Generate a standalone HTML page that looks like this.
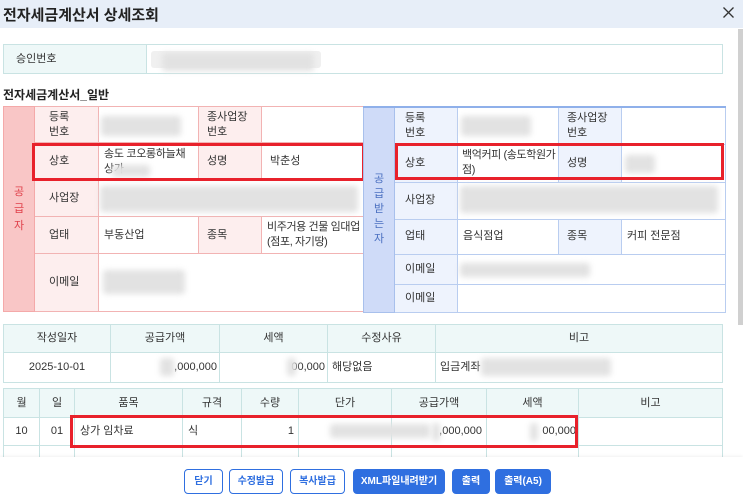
<!DOCTYPE html>
<html><head><meta charset="utf-8"><style>
*{margin:0;padding:0;box-sizing:border-box}
body{width:743px;height:495px;overflow:hidden;background:#fff;font-family:"Liberation Sans","Noto Sans CJK KR",sans-serif;color:#333;font-size:11px;position:relative}
.a{position:absolute}
table{border-collapse:collapse;table-layout:fixed;position:absolute}
td{font-size:11px;line-height:15px;padding:0 8px;vertical-align:middle;overflow:hidden;word-break:break-all}
.s td{border:1px solid #f2b3b3}
.s td.l{background:#fdeeee}
.r td{border:1px solid #b9cdf0}
.r td.l{background:#eef3fd}
.g td{border:1px solid #c9e3e3}
.g td.h{background:#eef8f8;text-align:center}
.blur{position:absolute;background:#e2e2e2;filter:blur(3px);border-radius:3px}
.red{position:absolute;border:3px solid #e8212b}
.btn{position:absolute;top:469px;height:25px;border:1px solid #2f6fe0;border-radius:4px;color:#2f6fe0;font-size:10px;font-weight:bold;text-align:center;line-height:23px;background:#fff}
.btn.f{background:#2f6fe0;color:#fff}
</style></head><body>
<div class="a" style="left:0;top:0;width:743px;height:28px;background:#e7eef8"></div>
<div class="a" style="left:3px;top:4px;font-size:15px;font-weight:bold;color:#222">전자세금계산서 상세조회</div>
<svg class="a" style="left:722px;top:6px" width="13" height="13" viewBox="0 0 13 13"><path d="M1.5 1.5L11.5 11.5M11.5 1.5L1.5 11.5" stroke="#333" stroke-width="1.3"/></svg>
<div class="a" style="left:738px;top:29px;width:5px;height:296px;background:#d0d0d0"></div>

<table class="g" style="left:3px;top:44px;width:720px;height:30px"><tr><td class="h" style="width:143px;text-align:left;padding-left:12px">승인번호</td><td></td></tr></table>
<div class="a" style="left:151px;top:51px;width:170px;height:17px;background:#f0f0f0;border-radius:3px"></div>
<div class="blur" style="left:162px;top:53px;width:152px;height:18px"></div>
<div class="a" style="left:3px;top:86px;font-size:12px;font-weight:bold;color:#222">전자세금계산서_일반</div>

<table class="s" style="left:3px;top:106px;width:361px;height:205px">
<colgroup><col style="width:31px"><col style="width:64px"><col style="width:100px"><col style="width:63px"><col style="width:103px"></colgroup>
<tr style="height:36px"><td rowspan="5" style="background:#f9c6c6;color:#e0404a;text-align:center;padding:0;line-height:17px;border-color:#f4a9a9">공<br>급<br>자</td><td class="l" style="padding-left:14px">등록<br>번호</td><td></td><td class="l">종사업장<br>번호</td><td></td></tr>
<tr style="height:38px"><td class="l" style="padding-left:14px">상호</td><td style="padding:0 2px 0 5px;letter-spacing:-0.3px">송도 코오롱하늘채 상가</td><td class="l">성명</td><td>박춘성</td></tr>
<tr style="height:36px"><td class="l" style="padding-left:14px">사업장</td><td colspan="3"></td></tr>
<tr style="height:37px"><td class="l" style="padding-left:14px">업태</td><td style="padding-left:5px">부동산업</td><td class="l">종목</td><td style="padding:0 1px 0 5px;letter-spacing:-0.4px;word-break:keep-all">비주거용 건물 임대업 (점포, 자기땅)</td></tr>
<tr style="height:58px"><td class="l" style="padding-left:14px">이메일</td><td colspan="3"></td></tr>
</table>
<div class="blur" style="left:101px;top:116px;width:80px;height:20px"></div>
<div class="blur" style="left:112px;top:165px;width:38px;height:12px"></div>
<div class="blur" style="left:100px;top:186px;width:258px;height:26px"></div>
<div class="blur" style="left:103px;top:270px;width:82px;height:24px"></div>
<div class="red" style="left:32px;top:143px;width:333px;height:38px"></div>

<table class="r" style="left:363px;top:106px;width:362px;height:205px">
<colgroup><col style="width:31px"><col style="width:63px"><col style="width:101px"><col style="width:63px"><col style="width:104px"></colgroup>
<tr style="height:37px;border-top:2px solid #8fb0ea"><td rowspan="6" style="background:#cfdbf8;color:#4a6fc0;text-align:center;padding:0;line-height:15px;border-color:#a8c0ec">공<br>급<br>받<br>는<br>자</td><td class="l" style="padding-left:10px">등록<br>번호</td><td></td><td class="l">종사업장<br>번호</td><td></td></tr>
<tr style="height:38px"><td class="l" style="padding-left:10px">상호</td><td style="padding-left:4px;padding-right:1px;letter-spacing:-0.4px">백억커피 (송도학원가점)</td><td class="l">성명</td><td></td></tr>
<tr style="height:37px"><td class="l" style="padding-left:10px">사업장</td><td colspan="3"></td></tr>
<tr style="height:35px"><td class="l" style="padding-left:10px">업태</td><td style="padding-left:5px">음식점업</td><td class="l">종목</td><td style="padding-left:5px">커피 전문점</td></tr>
<tr style="height:30px"><td class="l" style="padding-left:10px">이메일</td><td colspan="3"></td></tr>
<tr style="height:28px"><td class="l" style="padding-left:10px">이메일</td><td colspan="3"></td></tr>
</table>
<div class="blur" style="left:461px;top:116px;width:70px;height:20px"></div>
<div class="blur" style="left:625px;top:155px;width:30px;height:18px"></div>
<div class="blur" style="left:460px;top:186px;width:258px;height:27px"></div>
<div class="blur" style="left:460px;top:263px;width:130px;height:14px"></div>
<div class="red" style="left:395px;top:143px;width:329px;height:37px"></div>

<table class="g" style="left:3px;top:324px;width:720px;height:58px">
<colgroup><col style="width:107px"><col style="width:109px"><col style="width:108px"><col style="width:108px"><col></colgroup>
<tr style="height:28px"><td class="h">작성일자</td><td class="h">공급가액</td><td class="h">세액</td><td class="h">수정사유</td><td class="h">비고</td></tr>
<tr style="height:30px"><td style="text-align:center">2025-10-01</td><td style="text-align:right;padding-right:2px">,000,000</td><td style="text-align:right;padding-right:2px">00,000</td><td style="padding-left:4px">해당없음</td><td style="padding-left:4px">입금계좌</td></tr>
</table>
<div class="blur" style="left:160px;top:358px;width:14px;height:18px"></div>
<div class="blur" style="left:287px;top:358px;width:9px;height:18px"></div>
<div class="blur" style="left:481px;top:358px;width:130px;height:18px"></div>

<table class="g" style="left:3px;top:388px;width:720px;height:80px">
<colgroup><col style="width:36px"><col style="width:35px"><col style="width:108px"><col style="width:59px"><col style="width:57px"><col style="width:93px"><col style="width:95px"><col style="width:92px"><col></colgroup>
<tr style="height:29px"><td class="h">월</td><td class="h">일</td><td class="h">품목</td><td class="h">규격</td><td class="h">수량</td><td class="h">단가</td><td class="h">공급가액</td><td class="h">세액</td><td class="h">비고</td></tr>
<tr style="height:28px"><td style="text-align:center;padding:0">10</td><td style="text-align:center;padding:0">01</td><td style="padding-left:5px">상가 임차료</td><td style="padding-left:5px">식</td><td style="text-align:right;padding-right:4px">1</td><td></td><td style="text-align:right;padding-right:4px">,000,000</td><td style="text-align:right;padding-right:2px">00,000</td><td></td></tr>
<tr style="height:23px"><td></td><td></td><td></td><td></td><td></td><td></td><td></td><td></td><td></td></tr>
</table>
<div class="blur" style="left:330px;top:424px;width:100px;height:14px"></div>
<div class="blur" style="left:432px;top:423px;width:8px;height:18px"></div>
<div class="blur" style="left:530px;top:423px;width:8px;height:18px"></div>
<div class="red" style="left:70px;top:415px;width:508px;height:33px"></div>

<div class="a" style="left:0;top:457px;width:743px;height:38px;background:#fff;box-shadow:0 -1px 3px rgba(0,0,0,0.06)"></div>
<div class="btn" style="left:184px;width:39px">닫기</div>
<div class="btn" style="left:229px;width:54px">수정발급</div>
<div class="btn" style="left:290px;width:55px">복사발급</div>
<div class="btn f" style="left:353px;width:92px">XML파일내려받기</div>
<div class="btn f" style="left:452px;width:38px">출력</div>
<div class="btn f" style="left:495px;width:56px">출력(A5)</div>
</body></html>
